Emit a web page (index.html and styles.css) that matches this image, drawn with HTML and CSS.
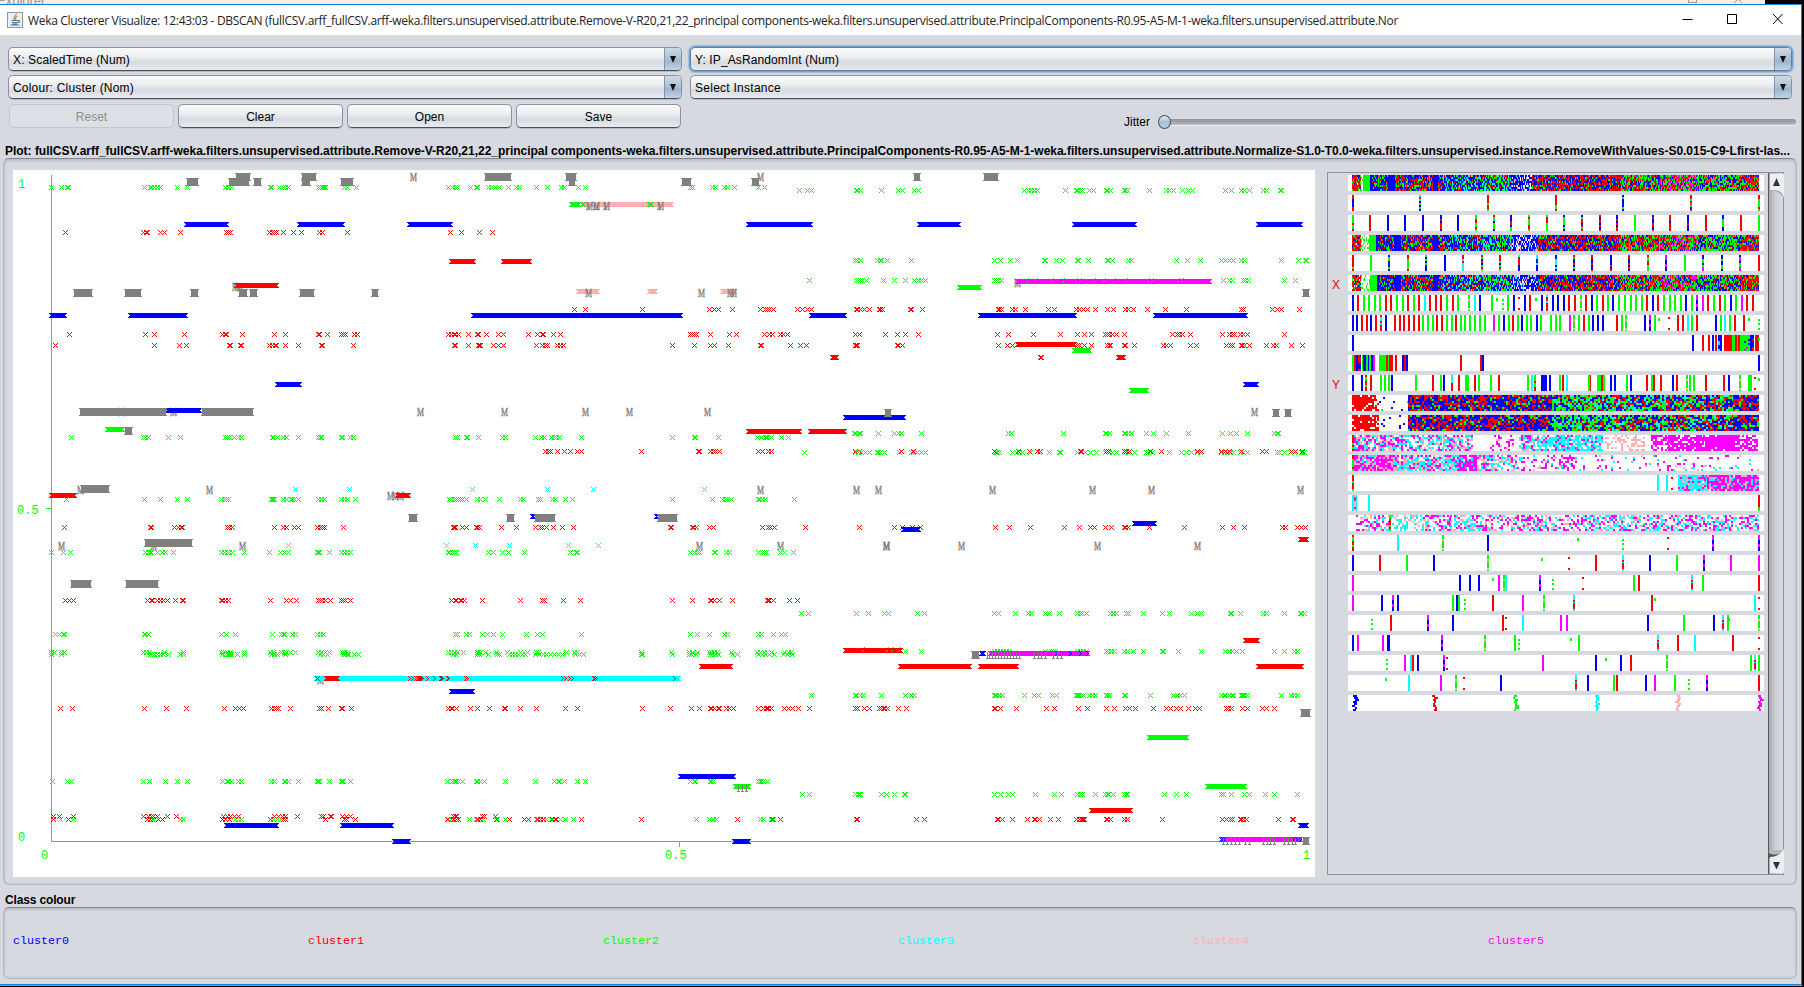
FILE: index.html
```html
<!DOCTYPE html>
<html lang="en">
<head>
<meta charset="utf-8">
<title>Weka Clusterer Visualize</title>
<link rel="stylesheet" href="styles.css">
</head>
<body>
<div class="behind"><span class="behind-title">Explorer</span><span class="behind-sq"></span><svg width="8" height="3" viewBox="0 0 8 3"><path d="M0 3L4 -1L8 3" fill="none" stroke="#999"/></svg></div>
<main class="window">
  <header class="titlebar">
    <svg class="java" width="16" height="16" viewBox="0 0 16 16"><rect x=".5" y=".5" width="15" height="15" fill="#e9eef3" stroke="#8d98a5"/><path d="M9.300 1.500C9.800 4 5.300 4.500 7.500 7.800M10.500 4C7.500 5.500 9 6 8.300 8" fill="none" stroke="#e8862d" stroke-width="1.300"/><path d="M4.500 8.500h6M5 10.500h5.500M3.500 13h9M10.500 8.500c3-.3 2.500 2-.2 2.200M5.500 12h4.500" fill="none" stroke="#4c7896" stroke-width="1.100"/></svg>
    <span class="title" data-w="1370">Weka Clusterer Visualize: 12:43:03 - DBSCAN (fullCSV.arff_fullCSV.arff-weka.filters.unsupervised.attribute.Remove-V-R20,21,22_principal components-weka.filters.unsupervised.attribute.PrincipalComponents-R0.95-A5-M-1-weka.filters.unsupervised.attribute.Nor</span>
    <svg class="controls" width="106" height="14" viewBox="0 0 106 14"><path d="M1.500 7.500h10M46.500 2.500h9v9h-9zM92 2l9.500 10M101.500 2L92 12" fill="none" stroke="#000"/></svg>
  </header>
  <section class="controls-grid">
    <div class="left-col">
      <div class="combo"><span data-w="117">X: ScaledTime (Num)</span><i class="arrow"></i></div>
      <div class="combo"><span data-w="121">Colour: Cluster (Nom)</span><i class="arrow"></i></div>
      <div class="buttons"><button class="btn" disabled>Reset</button><button class="btn">Clear</button><button class="btn">Open</button><button class="btn">Save</button></div>
    </div>
    <div class="right-col">
      <div class="combo focus"><span data-w="144">Y: IP_AsRandomInt (Num)</span><i class="arrow"></i></div>
      <div class="combo"><span data-w="86">Select Instance</span><i class="arrow"></i></div>
      <div class="jitter"><span>Jitter</span><div class="track"><i class="knob"></i></div></div>
    </div>
  </section>
  <h2 class="plot-title"><span data-w="1785">Plot: fullCSV.arff_fullCSV.arff-weka.filters.unsupervised.attribute.Remove-V-R20,21,22_principal components-weka.filters.unsupervised.attribute.PrincipalComponents-R0.95-A5-M-1-weka.filters.unsupervised.attribute.Normalize-S1.0-T0.0-weka.filters.unsupervised.instance.RemoveWithValues-S0.015-C9-Lfirst-las...</span></h2>
  <section class="panel plot-panel">
    <svg id="plot" class="plot" width="1302" height="707" viewBox="13 170 1302 707"></svg>
    <div class="attrs">
      <div id="strips" class="strips"></div>
      <div class="scroll">
        <svg width="15" height="26" viewBox="0 0 15 26"><path d="M0 17C8 17 12 20 14.500 25V17z" fill="#9b9ea5"/><path d="M1 1h14v24C13 19 10 17 5 17H1z" fill="#eceef1"/><path d="M7.500 5l3.500 8H4z" fill="#333"/></svg>
        <svg width="15" height="26" viewBox="0 0 15 26"><path d="M0 2v8C8 10 12 6 14 2z" fill="#b5b7bc"/><path d="M0 5C3 7 8 7 11 5L6 10H0z" fill="#555"/><path d="M1 9C8 9 12 6 15 1v24H1z" fill="#eceef1"/><path d="M7.500 21.500L11 14H4z" fill="#333"/></svg>
      </div>
    </div>
  </section>
  <h2 class="class-title">Class colour</h2>
  <section class="panel class-panel">
    <span class="c-b">cluster0</span><span class="c-r">cluster1</span><span class="c-g">cluster2</span><span class="c-c">cluster3</span><span class="c-p">cluster4</span><span class="c-m">cluster5</span>
  </section>
</main>
<script src="plot.js"></script>
</body>
</html>
```
FILE: styles.css
```css
* { box-sizing: border-box; }
body { margin: 0; width: 1804px; height: 987px; overflow: hidden; background: #000; font: 12px "Liberation Sans", Arial, sans-serif; color: #000; display: flex; flex-direction: column; }
.behind { height: 4px; width: 1765px; background: #eeeeee; overflow: hidden; display: flex; color: #999; flex: none; line-height: 4px; }
.behind-title { width: 1691px; font-size: 13px; margin-left: -3px; line-height: 1px; }
.behind-sq { width: 9px; height: 3px; border: 1px solid #999; border-top: 0; margin-right: 37px; }
.window { width: 1802px; height: 981px; background: #d6d9df; border: solid #1883d7; border-width: 1px 1px 1px 0; box-shadow: 0 1px 0 #999; display: flex; flex-direction: column; flex: none; }
.titlebar { height: 30px; background: #fff; display: flex; align-items: center; flex: none; padding-left: 7px; }
.java { flex: none; margin: -1px 5px 0 0; }
.title { font: 12px "Open Sans", "Noto Sans", sans-serif; color: #222; white-space: nowrap; width: 1370px; }
.controls { margin-left: 283px; margin-top: -2px; }
[data-w] { white-space: nowrap; }
.controls-grid { display: flex; gap: 8px; padding: 12px 0 0 8px; height: 107px; flex: none; }
.left-col { width: 674px; display: flex; flex-direction: column; gap: 4px; }
.right-col { width: 1106px; display: flex; flex-direction: column; gap: 4px; }
.combo { height: 24px; width: 100%; flex: none; border: 1px solid #8e919b; border-bottom: 1px solid #4b4f5a; border-radius: 5px; background: linear-gradient(#fbfbfc, #eceef1 40%, #d7dae0 65%, #e8eaef); display: flex; justify-content: space-between; align-items: center; padding-left: 4px; overflow: hidden; box-shadow: 0 1px 0 #b5b8c0; }
.combo span { padding-top: 2px; }
.right-col .combo { width: 1102px; }
.combo.focus { box-shadow: 0 0 0 1px #73a4d1, 0 0 1px 2px #9dbddc; border-color: #5f7f9f; }
.arrow { width: 17px; height: 24px; flex: none; border-left: 1px solid #7d97b0; background: linear-gradient(#d3dee8, #a9bfd3 50%, #9db6cd 60%, #c5d9ea); display: flex; align-items: center; justify-content: center; }
.arrow::before { content: ""; border: 3.5px solid transparent; border-top: 7px solid #111; border-bottom: 0; }
.buttons { display: flex; gap: 4px; padding: 1px 1px 0; }
.btn { flex: 1; height: 24px; padding: 2px 0 0; font: 12px "Liberation Sans", Arial, sans-serif; color: #000; border: 1px solid #8e919b; border-bottom-color: #4b4f5a; border-radius: 5px; background: linear-gradient(#fbfbfc, #eceef1 40%, #d7dae0 65%, #e8eaef); box-shadow: 0 1px 0 #b5b8c0; }
.btn:disabled { color: #8e8f91; background: #dcdfe4; border-color: #c3c6cd; box-shadow: none; }
.jitter { display: flex; align-items: center; margin-top: 10px; padding-left: 434px; height: 18px; gap: 7px; }
.track { flex: 1; height: 6px; border-radius: 3px; background: linear-gradient(#8d919a, #a7abb4 70%, #c3c6cc); box-shadow: 0 1px 0 #eceef1; display: flex; align-items: center; margin-left: 1px; }
.knob { width: 13px; height: 14px; border-radius: 50%; border: 1px solid #3f566e; background: linear-gradient(#e8eef4, #a9bfd3 50%, #bad0e4); }
h2 { margin: 0; font: bold 12px "Liberation Sans", Arial, sans-serif; flex: none; }
.plot-title { height: 16px; line-height: 18px; padding-left: 5px; }
.panel { margin-left: 3px; width: 1794px; border: 1px solid #b3b5ba; border-top-color: #85888e; border-radius: 6px; flex: none; display: flex; box-shadow: inset 0 2px 2px #bbbec3, inset 0 0 2px 1px #c6c9cf; }
.plot-panel { height: 727px; padding: 11px 0 0 9px; gap: 12px; }
.plot { background: #fff; flex: none; }
.plot text { font: 12px "Liberation Mono", monospace; }
.plot .m { font: 12px "Liberation Serif", serif; fill: #808080; stroke: #808080; stroke-width: .4px; }
.axis { fill: #0f0; }
.attrs { width: 457px; height: 703px; margin-top: 2px; border: 1px solid #8e9199; display: flex; }
.strips { width: 440px; display: flex; flex-direction: column; gap: 4px; padding-top: 2px; }
.strip { display: flex; height: 16px; }
.xy { width: 20px; padding-left: 4px; color: #e00; font: 12px "Liberation Sans", Arial, sans-serif; line-height: 21px; }
.strip svg { background: #fff; }
.scroll { width: 15px; border-left: 1px solid #55585e; background: linear-gradient(90deg, #a4a6ac, #c9cbcf 40%, #d6d9df 80%); display: flex; flex-direction: column; justify-content: space-between; }
.class-title { height: 22px; line-height: 30px; padding-left: 5px; letter-spacing: -.15px; }
.class-panel { height: 72px; padding: 25px 0 0 9px; }
.class-panel span { width: 295px; font: 11.7px/16px "Liberation Mono", monospace; }
.c-b { color: #00f; } .c-r { color: #f00; } .c-g { color: #0f0; } .c-c { color: #0ff; } .c-p { color: #ffafaf; } .c-m { color: #f0f; }
```
FILE: plot.js
```js
const COL = { b: '#0000ff', r: '#ff0000', g: '#00ff00', c: '#00ffff', p: '#ffafaf', m: '#ff00ff', k: '#808080' };
const NS = 'http://www.w3.org/2000/svg';
let seed = 7;
const rnd = () => (seed = (seed * 16807) % 2147483647) / 2147483647;

function add(svg, tag, attrs, text) {
  const e = document.createElementNS(NS, tag);
  for (const k in attrs) e.setAttribute(k, attrs[k]);
  if (text) e.textContent = text;
  svg.appendChild(e);
}
const box = (x, y, w, h) => `M${x} ${y}h${w}v${h}h${-w}z`;

// Rows of marks. Each tile has an origin and lines "kind y items", items in thirds of a pixel.
// Lower case colour: crosses, or a-b runs of crosses. K: solid runs of M. M: single M.
const TILES = [
[0, 160, `
g 82 154 184 203 206 433 452 455 464 472 481 532 562 676 685 694 811 814 838 850 856 866 955 961 967 970 973 976 1033 1042 1069 1344
b 193 553-686 892-1034 1222-1358
r 217 196 430 439 442 481 493 541 679 685 691 808 817 823 829 850 880 904 958 967 1042 1351
M 382 706 717
r 376 703-836
K 387 220-278 373-425 571-596 715-743 749-773 898-944 1114-1136
K 39 706-752 904-950
K 54 559-596 685-749 760-785 904-932 1021-1061
M 51 1240
b 466 148-200 385-563
r 523 208 436 463 553 667 676 679 727 823 856 955 958 982 1024 1030 1036 1063 1072 1345
r 556 166 463 538 559 688 691 721 724 808 817 826 829 856 895 964 967 1060
b 673 826-905
M 758 364 519
b 751 496-606
K 744 238-500 604-761
M 758 1261
g 808 316-376
K 801 373-398
g 832 214 430 436 445 505 541 676 682 688 703 715 724 817 820 832 850 859 895 955 961 964 1024 1027 1051 1060
M 992 241 628
K 975 241-331
c 988 886 1048
M 1010 1172 1187 1202
r 1006 148-230 1186-1232
g 1018 199 433 481 532 562 664 673 679 685 814 817 820 823 850 859 874 877 883 895 955 964 973 1024 1033 1042 1066 1348`],
[440, 160, `
g 82 25 37 46 52 91 109 112 145 154 166 178 205 229 238 289 322 364 373 415 436 751 757 817 826 853 862 883 955 973
g 91 1078 1102 1114 1249 1252 1261 1324
M 51 961
K 39 133-215 376-410
K 54 385-409 724-755 934-961
p 133 424-701
g 133 388-424 427 430 628 631 634
T 139 445 463 472 496 658
M 139 448 470 499 662
b 193 919-1119
r 217 31 64 118 157
r 304 28-107 184-275
g 301 1246 1252 1261 1312 1321 1342
g 361 1108 1249 1255 1261 1267 1279 1330
p 394 409-479 622-653 841-890
M 400 445 784 872 880
r 448 403 436 607 808 823 835 877 961 976 982 988 1000 1072 1087 1102 1114 1249 1252 1261 1273 1288 1318 1327
b 466 94-728 1108-1220
r 523 25 34 43 46 55 85 112 115 139 175 190 265 292 307 310 340 361 751 757 763 769 811 868 889 973 988 997 1021 1030 1042 1246 1258 1336
r 556 43 46 85 115 118 121 160 175 190 289 307 316 322 352 361 370 697 763 811 823 865 961 964 1051 1081 1099 1246 1249 1252
r 592 1171-1196
M 758 193 436 568 802
b 772 1210-1397
K 747 1333-1355
r 814 919-1085 1105-1220
g 832 46 52 79 82 115 187 196 286 304 313 334 343 349 358 424 697 763 766 835 952 964 976 979 982 994 1024 1045
g 820 1243 1246 1258 1261 1315
r 874 316 325 331 352 373 391 412 424 604 775 778 811 820 826 838 955 967 985 994 1246 1258
g 877 1093 1246 1255 1264 1276 1288 1312 1315 1333
c 988 97 322 460 793
M 992 961 1249 1315
g 1018 34 43 49 55 61 67 79 112 121 136 178 241 250 295 301 337 346 376 397 697 817 847 856 862 874 955 958 967 976 1063`],
[880, 160, `
K 39 100-122 310-356
g 91 4 55 67 103 115 433 445 454 463 472 556 589 592 601 607 628 640 679 682 691 733 736 742 808 859 868 880 907 925 937 1036 1054 1084 1093 1108 1150 1159 1201 1204
b 193 112-242 577-770 1129-1268
g 301 4 22 94 343 361 391 412 493 496 529 547 592 595 625 682 685 697 745 754 889 922 961 1024 1036 1048 1060 1084 1093 1204 1255 1276 1279
M 370 412
m 364 406-995
g 361 10 43 76 103 115 124 136 343 349 355 364 1030 1048 1057 1090 1096 1105 1213 1246
G 366 442 470 517 550 589 601 643 673 703 739 805 817 895 907
g 382 232-305
K 387 1267-1289
r 448 2 8 91 94 127 355 358 364 397 406 436 505 523 589 598 610 622 646 682 700 736 745 760 802 856 919 1084 1090 1177 1192 1204 1258
b 466 295-590 820-1103
r 523 16 52 76 115 352 385 460 541 592 613 634 676 682 688 697 709 733 877 892 898 907 931 1027 1048 1057 1063 1081 1090 1102 1213
r 556 52 55 67 355 382 397 592 598 613 634 682 688 691 733 736 763 850 859 871 931 949 1039 1051 1057 1084 1087 1093 1108 1159 1180 1189 1234 1267
r 553 406-590
r 592 481 484 709-737
g 571 577-635
b 673 1090-1136
g 691 748-806
K 747 13-35 1177-1199 1213-1235
M 758 1123
g 820 43 55 64 124 385 394 550 676 679 688 733 736 745 754 799 820 859 925 1027 1051 1069 1102 1183 1192 1195
g 877 1 13 58 94 100 112 124 136 346 349 352 358 397 409 418 427 451 478 508 538 541 592 604 616 631 649 676 688 697 709 736 745 763 799 805 817 868 904 919 934 952 961 1024 1033 1042 1051 1060 1081 1090 1102 1192 1198 1213 1231 1243 1264 1267 1273
r 874 64 100 343 415 448 472 481 601 604 679 685 733 739 748 811 844 952 964 1024 1036 1048 1084 1147 1159 1234 1246 1267
M 992 337 637 814 1261`],
[0, 500, `
r 82 193 451 454 523 535 544 547 682 688 697 823 850 859 883 895 952 961 967 973 1030
c 136 865 1340
M 140 184 460 727
K 117 433-578
K 240 211-275 376-476
K 42 1225-1253
g 157 154 190 211 436 445 451 454 472 487 496 520 664 673 682 688 697 733 808 841 853 865 952 955 958 988 1024 1033 1042 1051 1345
r 301 196 208 220 442 454 457 472 481 490 502 526 547 550 664 667 676 685 811 859 871 889 955 961 967 976 991 1024 1030 1036 1051
g 403 166 178 190 193 433 436 445 664 679 706 817 844 850 853 877 886 952 961 970
g 457 154 163 184 193 430 439 448 493 550 664 670 682 691 733 811 820 844 853 859 871 886 955 964 976 988 1027 1033 1042 1345
g 463 154 184 451 457 463 472 481 490 505 541 550 667 676 682 685 688 691 694 712 733 814 823 832 856 961 970 982 1030 1036 1042 1045 1063 1075
M 541 961
c 535 943-2044
r 535 952 973-1021
V 535 1228 1237 1246 1252 1255 1258 1261 1264 1267 1282 1303 1324 1345
r 625 181 217 433 499 559 673 706 718 730 814 823 829 835 871 958 964 985 1024 1027 1054 1344
g 844 157 202 214 430 448 496 532 562 667 682 685 694 715 724 814 823 853 856 865 895 952 955 958 988 1024 1027 1030 1051 1342
g 958 181 220 457 460 541 550 706 715 724 811 820 832 844 856 976 1345
r 949 160 178 220 430 445 454 460 472 502 529 670 682 691 703 715 823 835 847 856 892 964 970 991 994 1027 1039 1051
r 958 160 205 442 451 475 487 667 676 688 811 850 856 976 1033 1039 1066 1342
b 976 673-836 1021-1181
b 1024 1177-1232`],
[440, 500, `
b 50 271-288 643-658
K 42 199-224 283-347 652-713
r 82 40 43 46 67 79 109 112 118 184 229 286 301 307 319 340 367 400 691 694 757 760 769 808 820 967 985 991 1003 1096 1258
c 136 19 106 208 385 475
M 140 778 1021 1339
g 157 28 37 43 49 145 160 187 205 253 391 409 412 751 763 772 778 823 826 859 868 955 967 973 979 1021 1033 1060
r 301 34 46 49 61 64 73 127 241 307 313 370 421 697 757 811 814 823 838 877 982 985 988 1000 1048 1072
g 340 1084 1105 1249 1285 1333 1345
g 403 46 52 79 88 127 142 160 187 259 292 307 424 751 772 808 853 862 955 964 1000 1024 1036
g 457 25 34 43 52 70 112 115 121 136 170 202 241 262 289 295 379 403 412 604 694 748 757 772 808 814 823 832 874 952 961 973 982 994 1033 1045 1054
g 463 40 49 112 118 145 172 178 208 217 226 235 247 256 286 298 310 319 331 343 355 367 406 418 430 604 607 697 748 754 769 811 817 826 835 877 892 955 967 976 988 1003 1030 1042 1057
r 452 1210-1388
G 454 1270 1342 1358 1378
r 499 778-878
V 535 2 8 22 76 82 367 376 388 397 460 463 470 703
b 574 28-104
g 586 1114 1246 1249 1261 1270 1324
r 625 25 34 37 49 91 112 148 193 196 241 289 376 412 607 691 754 778 811 814 823 835 838 859 868 880 955 970 979 982 985 994 1033 1045 1057 1075 1108 1246 1252 1273 1288 1318 1330 1342
b 829 715-887
g 844 22 37 43 46 49 55 67 109 112 121 133 196 286 343 355 358 373 412 436 751 763 766 811 814 820 955 961 964 970 982
g 859 880-932
T 866 895 907 919
g 883 1087 1108 1246 1255 1258 1261 1324 1339
g 958 34 43 88 109 115 121 130 172 196 289 295 319 334 361 376 400 769 808 820 829 892 961 970 994 1000
r 949 40 46 49 127 133 166
r 958 22 40 49 55 112 121 169 208 253 265 292 301 310 337 346 349 424 604 892 997 1021 1249 1252
b 1024 877-932`],
[880, 500, `
r 82 43 67 97 121 346 388 451 553 598 631 643 676 694 733 736 745 808 913 1027 1060 1093 1207 1216 1252 1264 1276
b 88 64-122
b 70 757-830
r 118 1255-1286
M 140 19 244 652 952
g 340 13 25 112 133 343 355 406 445 454 496 508 538 592 601 607 619 691 700 709 739 745 790 847 868 934 952 964 1051 1054 1081 1150 1159 1213 1261 1264 1273
r 421 1090-1139
g 454 76 124 343 352 361 370 379 388 496 514 520 526 592 601 610 619 679 685 694 703 733 742 760 790 847 850 895 964 1036 1048 1057 1069 1087 1183 1213 1243 1252
m 460 326-629
b 460 298-317
W 460 530 545 572 600 622
K 453 274-301
T 466 322 328 337 346 355 364 373 382 391 400 409 418 463 475 484 496 520 532 545
r 499 55-275 295-416 1129-1271
g 586 4 76 94 103 343 346 349 358 367 433 463 475 517 529 589 592 595 598 610 628 637 646 679 682 688 733 736 811 880 892 901 913 1024 1033 1036 1048 1057 1060 1084 1087 1090 1093 1102 1204 1234 1243 1252
r 625 4 13 22 55 79 343 346 361 409 499 523 595 622 679 703 736 748 766 820 859 871 889 901 925 946 958 1039 1045 1054 1087 1102 1147 1159 1183
K 627 1261-1292
g 712 802-926
g 859 976-1100
g 883 4 19 43 73 76 343 361 385 397 466 523 544 592 601 607 646 676 682 685 700 733 739 742 853 889 919 1024 1030 1054 1093 1108 1156 1183 1252
r 931 628-758
r 958 109 133 352 355 367 397 442 463 466 478 511 535 589 598 604 607 610 613 679 682 691 733 742 847 1027 1039 1051 1057 1081 1084 1090 1099 1195 1237 1240
b 976 1255-1286
m 1018 1019-1268
b 1018 1025 1030
W 1018 1240 1250 1262
T 1024 1030 1042 1055 1066 1078 1097 1108 1150 1162 1172 1184 1213 1225 1237 1246
K 1011 1268-1289`]];

const plot = document.getElementById('plot');
add(plot, 'path', { d: box(51, 175, 1, 667) + box(51, 841, 1257, 1) + box(46, 508, 5, 1) + box(679, 841, 1, 6), class: 'axis', 'shape-rendering': 'crispEdges' });
[[18, 188, '1'], [17, 514, '0.5'], [18, 841, '0'], [41, 859, '0'], [665, 859, '0.5'], [1303, 859, '1']].forEach(([x, y, t]) =>
  add(plot, 'text', { x, y, class: 'axis' }, t));

for (const [ox, oy, rows] of TILES) {
  for (const line of rows.trim().split('\n')) {
    const [kind, yy, ...items] = line.split(' ');
    const y = oy + Math.floor(yy / 3);
    let d = '', col = kind;
    if (kind === 'V') col = 'r';
    if (kind === 'W') col = 'b';
    if (kind === 'G') col = 'g';
    if (kind === 'K' || kind === 'T') col = 'k';
    for (const it of items) {
      const [s, e] = it.split('-');
      const a = ox + Math.floor(s / 3);
      if (kind === 'M') {
        add(plot, 'text', { class: 'm', transform: `translate(${a - 3} ${y + 4}) scale(.66 1)` }, 'M');
      } else if (kind === 'K') {
        const w = ox + Math.round(e / 3) - a;
        d += box(a, y, w, 1) + box(a + 1, y + 1, w - 2, 6) + box(a, y + 7, w, 1);
      } else if (kind === 'T') {
        d += box(a, y - 3, 1, 6) + box(a - 1, y + 3, 3, 1);
      } else if (kind === 'G') {
        d += box(a, y - 1, 1, 1) + box(a - 1, y, 1, 1) + box(a + 1, y - 4, 1, 1);
      } else if (kind === 'V' || kind === 'W') {
        for (let k = -2; k <= 2; k++) d += box(a + 1 - Math.abs(k), y + k, 1, 1);
      } else if (e) {
        const w = ox + Math.round(e / 3) - a;
        d += box(a, y - 2, w, 1) + box(a + 1, y - 1, w - 2, 1) + box(a + 2, y, w - 4, 1) + box(a + 1, y + 1, w - 2, 1) + box(a, y + 2, w, 1);
      } else {
        for (let k = -2; k <= 2; k++) {
          d += box(a + k, y + k, 1, 1);
          if (k) d += box(a + k, y - k, 1, 1);
        }
      }
    }
    if (d) add(plot, 'path', { d, fill: COL[col], 'shape-rendering': 'crispEdges' });
  }
}

// Attribute strips. "colours x x": bars; "gd" one dot, "g3" three, "r2" two.
// "~from,to,density,colours" fills a span with random points; "=from,to,colour" is solid.
const DENSE = x => `~${126},${153},.95,rrrrgb;=${160 + x},${180 + x},g;~${153},${200},.25,g;=${180 + x},${187 + x},b;~${187 + x},${235 + x},1,bbrgb;=${235 + x},${254 + x},b;~${254 + x},${400},1,bbrrg;=370,384,b;~400,520,1,bbbrgc;~520,605,1,bgcgrb;~605,${665 + x},.85,bbbbbpc;~${665 + x},930,1,rrrbbgb;~930,1050,1,rrbgg;~1050,1160,1,rrbggm;~1160,1290,1,ggbbrg;~1290,1347,1,rrbgr`;
const BAND = '~126,180,.88,r;~180,195,.65,r;~195,207,.4,r;~207,295,.06,bbbg;~295,725,1,bbbbrrrg;~725,900,1,gggrbbc;~900,1270,1,rrgbbgc;~1270,1347,1,rrbbbg';
const ROWS = [
DENSE(0),
'br 129;brgc 330;rg 534;gr 738;bbg 939;mbgr 1143;rg 1347',
'rg 129;r 180 1188 1293;b 234 285 339 444;br 393 870 921 1029 1080 1134;rg 498 657 711;bgr 552 603 816;bg 762 1239;g 975 1347',
DENSE(18),
'rg 129 294 1014;g 183 1125;bg 237 348 1236;b 405;rc 459;bgr 516 570 792;bcr 627;bc 681 738;br 846 903 957;mb 1068;mbg 1179;bgm 1290;r 1347',
DENSE(20),
'b 129 510 612 645 696 729 744 762 846 909 1029 1128 1263;r 144 228 243 294 327 361 378 393 429 660 777 795 828 879 1011 1044 1194 1230 1312 1329;g 162 178 194 210 261 279 312 411 444 546 594 861 894 927 945 963 978 996 1062 1080 1096 1112 1146 1212 1245 1278;c 345;cr 711;gp 477 813;c 495;gd 561 678;g3 578;r2 627;mb 1161;m 1179 1296',
'b 129 141 183 228 582 636 681 849 864 879 1005 1218;r 156 171 198 255 270 282 297 312 327 381 396 438 609 822 921 1104 1119 1161 1275 1302;cr 213;c 1245;g 339 354 369 411 426 453 466 480 495 510 525 567 597 624 651 664 693 723 738 750 807 837 936 1035 1146 1233 1260;m 552 780;gp 792 948;mb 1020;gd 1047 1317;r2 1077;c 1134;g3 1347',
'b 129 1149 1209 1233;r 1179 1197 1218;cb 1227;=1242,1266,r;=1266,1275,g;=1275,1282,r;=1282,1284,g;=1284,1290,r;=1290,1320,g;~1296,1318,.12,bm;b 1323;rb 1329;=1334,1347,r;gd 1348',
'g 128 158;r 135;=138,152,b;br 150 147;=158,178,b;g 170 179;b 187;m 192;=207,228,g;=228,234,r;g 236;=238,249,r;r 258;b 279 291;r 286;r 453 513;b 519 1347',
'b 129 156 246 402 696 702 708 720 903 915 963 1089 1257;gr 168 675;r 183 369 447 495 567 759 841 876 1011 1032 1053 1101 1188 1242;g 213 225 237 318 393 468 474 507 543 654 750 837 864 871 882 951 1026 1140 1152 1317 1323;cr 426;c 666 771;gp 1131 1290;r2 1335;gd 1347',
BAND, BAND,
'~126,250,.75,cpm;~250,330,.65,ccmm;~330,400,.6,ccmp;~400,490,.7,mcp;~540,610,.25,mmp;~627,700,.6,mccp;~700,880,.8,ccccccm;~885,1005,.45,p;~1023,1075,.55,m;~1075,1180,.8,m;~1180,1285,.92,m;~1285,1345,.6,m;rg 129',
'~126,200,.95,mmcp;~200,250,1,mmmmmp;~250,440,.85,ccmp;~440,500,.95,mmmmc;~500,620,.6,mccp;~620,800,.3,mmmcp;~800,1347,.1,mmpc;rg 129',
'rg 129;c 1044 1071;r2 1086;~1104,1190,.95,cccpm;~1190,1347,.98,mmmmcp',
'=126,141,c;mp 135;c 177;rg 1347',
'~126,150,.15,m;~150,240,.5,mmcp;~240,340,.35,ccp;~340,420,.55,mmmcp;~420,520,.55,ccmp;~520,820,.5,mmcp;~820,1347,.55,mmccp;rg 240',
'rg 129;c 264;gp 399;b 534;gd 804;g3 939;r2 1074;mb 1209 1347',
'b 129 1020;r 210 858;g 291 1101;bbbg 372;gp 534;gd 696;r2 777;cr 939;mb 1182;m 1263 1347',
'm 129 567;b 450 480 507;gd 549;gp 582;c 588;mb 690;g3 729;r2 819;g 972 1179;r 987 1347;cr 1146',
'm 129 639;b 216 264 441;mb 249;g 429 447;g3 465;r 549 1026;gp 702;cr 792;gd 1035;c 1335;r2 1347',
'g3 186;r 243 579;mb 354;b 429 1014 1212;r2 588;c 639;m 753 771;g 1122 1254;cr 1239;gd 1257;gp 1347',
'b 129 234 237;m 144 219;mb 396;gp 525;g 615 807;g3 627;gd 783;cr 1044;r 1104 1269;c 1155;r2 1347',
'g3 231;m 285 699;c 303;r 309 963;b 324 858 933;mb 402;r2 411;gd 888;gp 1071;g 1323 1347;cr 1335',
'gd 228;c 297;m 393 1035;gp 438;r2 462;b 573 834 1008;cr 798;g 912 1095;r 921 1347;g3 1137;mb 1191',
'sb 132;sr 372;sg 615;sc 858;sp 1101;sm 1347'
];
const strips = document.getElementById('strips');
ROWS.forEach((row, i) => {
  const line = document.createElement('div');
  line.className = 'strip';
  const tag = document.createElement('span');
  tag.className = 'xy';
  tag.textContent = i === 5 ? 'X' : i === 10 ? 'Y' : '';
  const svg = document.createElementNS(NS, 'svg');
  svg.setAttribute('width', 416);
  svg.setAttribute('height', 16);
  const d = {};
  const put = (c, x, y, w, h) => {
    d[c] = (d[c] || '') + box(x, y, w, h);
  };
  // Each part becomes its own paths, so later parts paint over earlier ones.
  const flush = () => { for (const c in d) { add(svg, 'path', { d: d[c], fill: COL[c], 'shape-rendering': 'crispEdges' }); delete d[c]; } };
  const X = v => Math.round((v - 114) / 3);
  const pick = s => s[Math.floor(rnd() * s.length)];
  for (const part of row.split(';')) {
    if (part[0] === '~') {
      const [a, b, q, cs] = part.slice(1).split(',');
      const step = i < 6 ? 1 : 2;
      for (let x = X(a); x < X(b); x += step)
        for (let y = 0; y < 16; y += 2)
          if (rnd() < q) put(pick(cs), x, y, step, 2);
    } else if (part[0] === '=') {
      const [a, b, c] = part.slice(1).split(',');
      put(c, X(a), 0, X(b) - X(a), 16);
    } else {
      const [k, ...xs] = part.split(' ');
      for (const v of xs) {
        const x = X(v) - 1;
        if (k === 'gd') put('g', x, 3, 2, 3);
        else if (k === 'g3') [4, 8, 13].forEach(y => put('g', x, y, 2, 2));
        else if (k === 'r2') [2, 13].forEach(y => put('r', x, y, 2, 2));
        else if (k[0] === 's') for (let y = 0; y < 16; y += 2) put(k[1], x - 1 + Math.round(rnd() * 3), y, 2 + Math.round(rnd() * 2), 2);
        else if (k === 'cr' && i > 17) { put('c', x, 0, 2, 16); put('r', x, 5, 2, 2); put('r', x, 8, 2, 6); }
        else if (k === 'gp') { put('g', x, 0, 2, 16); put('p', x, 4, 2, 2); put('p', x, 13, 2, 2); }
        else if (k === 'mb') { put('b', x, 0, 2, 16); put('m', x, 0, 2, 5); put('m', x, 9, 2, 3); }
        else for (let y = 0; y < 16; y += 2) put(pick(k), x, y, 2, 2);
      }
    }
    flush();
  }
  line.append(tag, svg);
  strips.append(line);
});

// Spread each fixed-width label over its measured width.
document.querySelectorAll('[data-w]').forEach(el => {
  const r = document.createRange();
  r.selectNodeContents(el);
  const w = r.getBoundingClientRect().width;
  el.style.letterSpacing = (el.dataset.w - w) / el.textContent.length + 'px';
});
```
